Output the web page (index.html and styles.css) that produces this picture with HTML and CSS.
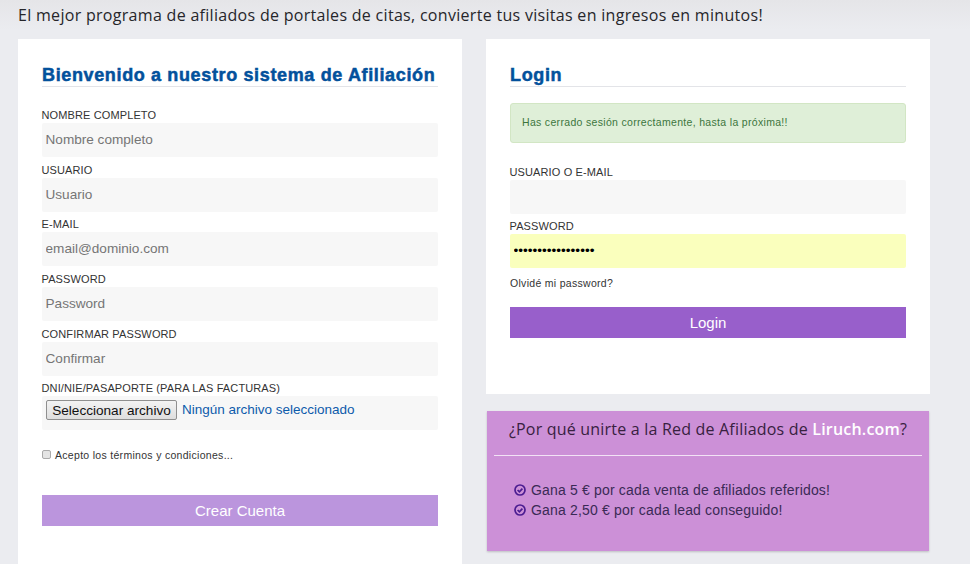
FILE: index.html
```html
<!DOCTYPE html>
<html lang="es">
<head>
<meta charset="utf-8">
<title>Afiliados</title>
<link rel="stylesheet" href="styles.css">
</head>
<body>
<p class="intro">El mejor programa de afiliados de portales de citas, convierte tus visitas en ingresos en minutos!</p>
<main class="columns">
  <section class="card card-register">
    <h2 class="card-title">Bienvenido a nuestro sistema de Afiliación</h2>
    <form class="form">
      <div class="field"><label class="label">NOMBRE COMPLETO</label><input class="input" placeholder="Nombre completo"></div>
      <div class="field"><label class="label">USUARIO</label><input class="input" placeholder="Usuario"></div>
      <div class="field"><label class="label">E-MAIL</label><input class="input" placeholder="email@dominio.com"></div>
      <div class="field"><label class="label">PASSWORD</label><input class="input" placeholder="Password"></div>
      <div class="field"><label class="label">CONFIRMAR PASSWORD</label><input class="input" placeholder="Confirmar"></div>
      <div class="field"><label class="label">DNI/NIE/PASAPORTE (PARA LAS FACTURAS)</label>
        <div class="file-row"><button type="button" class="file-btn">Seleccionar archivo</button><span class="file-name">Ningún archivo seleccionado</span></div>
      </div>
      <label class="terms"><input type="checkbox" class="check"><span>Acepto los términos y condiciones...</span></label>
      <button type="button" class="submit submit-light">Crear Cuenta</button>
    </form>
  </section>
  <div class="side">
    <section class="card card-login">
      <h2 class="card-title">Login</h2>
      <div class="alert">Has cerrado sesión correctamente, hasta la próxima!!</div>
      <form class="form">
        <div class="field field-login"><label class="label">USUARIO O E-MAIL</label><input class="input"></div>
        <div class="field field-login"><label class="label">PASSWORD</label><input class="input input-filled" type="password" value="aaaaaaaaaaaaaaaaa"></div>
        <a class="forgot" href="#">Olvidé mi password?</a>
        <button type="button" class="submit submit-dark">Login</button>
      </form>
    </section>
    <section class="why">
      <h3 class="why-title">¿Por qué unirte a la Red de Afiliados de <span class="brand">Liruch.com</span>?</h3>
      <ul class="why-list">
        <li class="why-item"><svg class="tick" viewBox="0 0 12 12"><circle cx="6" cy="6" r="5"/><path d="M3.6 6l1.8 1.8 3-3.2"/></svg>Gana 5 € por cada venta de afiliados referidos!</li>
        <li class="why-item"><svg class="tick" viewBox="0 0 12 12"><circle cx="6" cy="6" r="5"/><path d="M3.6 6l1.8 1.8 3-3.2"/></svg>Gana 2,50 € por cada lead conseguido!</li>
      </ul>
    </section>
  </div>
</main>
</body>
</html>
```

FILE: styles.css
```css
* { box-sizing: border-box; }
html, body { height: 100%; }
body {
  margin: 0;
  overflow: hidden;
  background: linear-gradient(#e5e5e8, #ebecf0 30px);
  font-family: "Liberation Sans", Arial, sans-serif;
  color: #333;
}
.intro {
  margin: 0;
  padding: 4px 18px 0;
  height: 39px;
  font-family: "Open Sans", sans-serif;
  font-size: 16px;
  line-height: 22px;
  font-weight: 500;
  letter-spacing: 0.3px;
  color: #26262a;
}
.columns { display: flex; gap: 24px; padding: 0 18px; align-items: flex-start; }
.card { width: 444px; background: #fff; padding: 24px 24px 0; }
.card-register { height: 560px; }
.card-login { height: 355px; }
.card-title {
  margin: 0;
  height: 24px;
  border-bottom: 1px solid #e3e4e8;
  font-size: 18px;
  line-height: 25px;
  font-weight: 700;
  letter-spacing: 0.64px;
  color: #03519c;
  -webkit-text-stroke: 0.5px #03519c;
  white-space: nowrap;
}
.form { display: flex; flex-direction: column; }
.card-register .form { padding-top: 20px; }
.field { display: flex; flex-direction: column; height: 54.7px; }
.field-login { height: 54px; }
.label {
  display: block;
  height: 16px;
  font-size: 11px;
  line-height: 16px;
  letter-spacing: 0.12px;
  margin-left: -0.5px;
  color: #333;
}
.input {
  height: 34px;
  width: 100%;
  border: 0;
  border-radius: 2px;
  outline: 0;
  padding: 0 3.5px 1px;
  background: #f7f7f7;
  font-family: "Liberation Sans", Arial, sans-serif;
  font-size: 13.6px;
  color: #000;
}
.input::placeholder { color: #757575; opacity: 1; }
.input-filled { background: #faffbd; }
.file-row {
  display: flex;
  align-items: flex-start;
  gap: 5px;
  height: 34px;
  padding: 4px 4px 0;
  background: #f7f7f7;
  border-radius: 2px;
}
.file-btn {
  height: 20px;
  width: 131px;
  padding: 0;
  border: 1px solid #8f8f8f;
  border-radius: 2px;
  background: linear-gradient(#f3f3f3, #dedede);
  font-family: "Liberation Sans", Arial, sans-serif;
  font-size: 13.6px;
  line-height: 17px;
  color: #111;
  white-space: nowrap;
}
.file-name { font-size: 13.5px; line-height: 20px; color: #0d5bab; white-space: nowrap; }
.terms {
  display: flex;
  align-items: center;
  gap: 4px;
  margin-top: 12px;
  height: 16px;
  font-size: 10.5px;
  letter-spacing: 0.3px;
  color: #333;
}
.check {
  width: 9px;
  height: 9px;
  margin: 0 0 2px;
  appearance: none;
  background: #e4e4e4;
  border: 1px solid #aaa;
  border-radius: 2px;
}
.submit {
  display: block;
  width: 100%;
  height: 31px;
  border: 0;
  padding: 0;
  font-family: "Liberation Sans", Arial, sans-serif;
  font-size: 15px;
  color: #fff;
}
.submit-light { margin-top: 32px; background: #bb95dd; }
.submit-dark { margin-top: 16px; background: #985fcb; }
.alert {
  height: 40px;
  margin-top: 16px;
  margin-bottom: 21px;
  padding: 0 11px;
  border: 1px solid #d2e6c4;
  border-radius: 3px;
  background: #dfefd8;
  font-size: 10.5px;
  line-height: 36px;
  letter-spacing: 0.32px;
  color: #3c763d;
}
.forgot {
  height: 16px;
  margin-top: 3px;
  font-size: 10.5px;
  line-height: 16px;
  letter-spacing: 0.3px;
  color: #333;
  text-decoration: none;
}
.side { display: flex; flex-direction: column; gap: 17px; width: 444px; }
.why {
  width: 442px;
  height: 140px;
  margin-left: 1px;
  padding: 0 7px;
  background: #cc90d7;
  box-shadow: 0 1px 2px rgba(0, 0, 0, 0.2);
}
.why-title {
  margin: 0;
  height: 45px;
  border-bottom: 1px solid #f2e2f5;
  font-family: "Open Sans", sans-serif;
  font-size: 16px;
  line-height: 36px;
  font-weight: 500;
  letter-spacing: 0.2px;
  text-align: center;
  color: #38213f;
}
.brand { color: #fff; font-weight: 600; }
.why-list { list-style: none; margin: 0; padding: 24px 0 0 20px; }
.why-item {
  display: flex;
  align-items: center;
  gap: 5px;
  height: 20px;
  font-size: 14px;
  letter-spacing: 0.17px;
  color: #3a2a55;
}
.tick { width: 12px; height: 12px; flex: none; fill: none; stroke: #4b1d91; stroke-width: 1.7; }
```
